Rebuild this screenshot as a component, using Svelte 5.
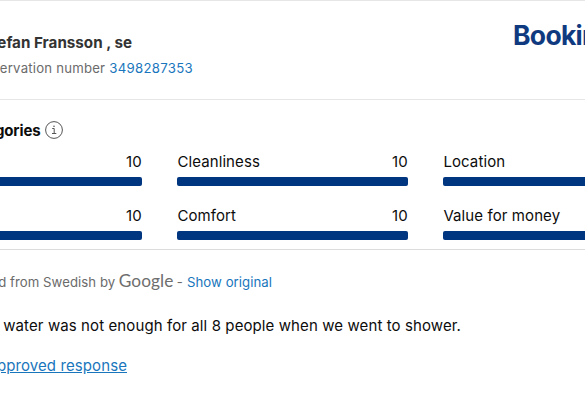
<script>
	const guest = {
		name: "efan Fransson , se",
		reservation: "3498287353"
	};

	const scores = [
		{ label: "", value: 10 },
		{ label: "Cleanliness", value: 10 },
		{ label: "Location", value: 10 },
		{ label: "", value: 10 },
		{ label: "Comfort", value: 10 },
		{ label: "Value for money", value: 10 }
	];
</script>

<main class="review">
	<header>
		<div class="guest">
			<h2><span>{guest.name}</span></h2>
			<p class="reservation">
				<span>ervation number</span>
				<a href="#reservation">{guest.reservation}</a>
			</p>
		</div>
		<div class="logo">Booking</div>
	</header>

	<section class="categories">
		<div class="heading">
			<h3>gories</h3>
			<svg class="info" viewBox="0 0 18 18">
				<circle cx="9" cy="9" r="8.4" />
				<path d="M7.2 7.5h2v5M7 12.5h4.3" />
				<circle class="dot" cx="9" cy="5.2" r="0.8" />
			</svg>
		</div>
		<div class="scores">
			{#each scores as score}
				<div class="score">
					<div class="label">
						<span>{score.label}</span>
						<span>{score.value}</span>
					</div>
					<div class="track">
						<div class="bar" style="width: {score.value * 10}%"></div>
					</div>
				</div>
			{/each}
		</div>
	</section>

	<section class="comment">
		<p class="translated">
			<span class="source">d from Swedish by</span>
			<span class="google">Google</span>
			<span class="dash">-</span>
			<a href="#original">Show original</a>
		</p>
		<p class="text"><span>water was not enough for all 8 people when we went to shower.</span></p>
		<p class="response"><a href="#response">pproved response</a></p>
	</section>
</main>

<style>
	:global(body) {
		background: #fff;
	}

	.review {
		box-sizing: border-box;
		width: 585px;
		height: 404px;
		overflow: hidden;
		border-top: 1px solid #e6e6e6;
		background: #fff;
		color: #0c0c0c;
		font-family: Inter, "Liberation Sans", sans-serif;
		font-size: 15px;
		letter-spacing: 0.1px;
		white-space: nowrap;
	}

	h2,
	h3,
	p {
		margin: 0;
	}

	a {
		color: #1976bc;
		text-decoration: none;
	}

	header {
		display: flex;
		justify-content: space-between;
		box-sizing: border-box;
		height: 99px;
		border-bottom: 1px solid #e6e6e6;
	}

	.guest {
		width: 193px;
		padding-top: 32px;
	}

	h2,
	.reservation,
	.heading,
	.translated,
	.text,
	.response {
		display: flex;
		justify-content: flex-end;
	}

	h2 {
		width: 132px;
		font-size: 15.2px;
		font-weight: 700;
		letter-spacing: 0;
		line-height: 20px;
		color: #333;
	}

	.reservation {
		gap: 4px;
		margin-top: 5px;
		font-size: 13.2px;
		letter-spacing: 0.2px;
		line-height: 20px;
		color: #6b6b6b;
	}

	.reservation a {
		letter-spacing: 0.3px;
	}

	.logo {
		width: 72px;
		padding-top: 19px;
		font-size: 26.5px;
		font-weight: 700;
		letter-spacing: -0.7px;
		line-height: 30px;
		color: #103a80;
	}

	.categories {
		box-sizing: border-box;
		height: 150px;
		padding-top: 20px;
		border-bottom: 1px solid #dcdcdc;
	}

	.heading {
		align-items: center;
		gap: 4px;
		width: 62.6px;
		height: 20px;
	}

	h3 {
		font-size: 15px;
		font-weight: 700;
		letter-spacing: -0.1px;
	}

	.info {
		flex: none;
		width: 18px;
		height: 18px;
		fill: none;
		stroke: #555;
		stroke-width: 1;
	}

	.dot {
		fill: #555;
		stroke: none;
	}

	.scores {
		display: grid;
		grid-template-columns: repeat(3, 230.4px);
		gap: 14px 35.6px;
		margin: 12px 0 0 -88.6px;
	}

	.score {
		height: 40px;
	}

	.label {
		display: flex;
		justify-content: space-between;
		height: 20px;
		padding-bottom: 5px;
		line-height: 20px;
	}

	.track {
		height: 9px;
	}

	.bar {
		height: 9px;
		border-radius: 2px;
		background: #00357f;
	}

	.translated {
		width: 272px;
		padding-top: 20px;
		font-size: 13.2px;
		letter-spacing: 0.05px;
		line-height: 25px;
		color: #6b6b6b;
	}

	.google {
		margin: -2px 3.5px 0;
		font-family: Lato, sans-serif;
		font-size: 17.3px;
		color: #6e6e6e;
	}

	.dash {
		margin-right: 4px;
	}

	.text {
		width: 461px;
		margin-top: 21px;
		line-height: 20px;
	}

	.response {
		width: 127px;
		margin-top: 20px;
		line-height: 20px;
	}

	.response a {
		text-decoration: underline;
	}
</style>
